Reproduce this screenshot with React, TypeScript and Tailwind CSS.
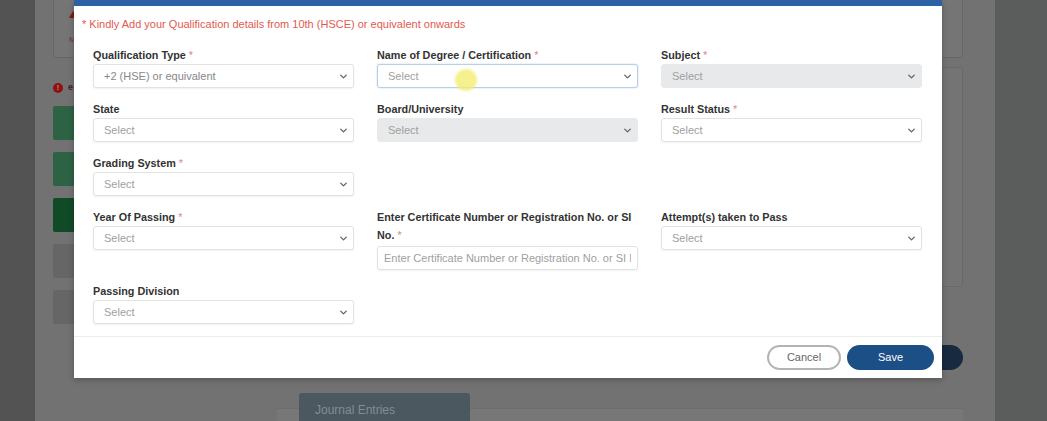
import { ChevronDown } from "lucide-react";

type Field = {
  label: string;
  labelTail?: string;
  required?: boolean;
  value?: string;
  disabled?: boolean;
  focused?: boolean;
  input?: boolean;
} | null;

const FIELDS: Field[] = [
  { label: "Qualification Type", required: true, value: "+2 (HSE) or equivalent" },
  { label: "Name of Degree / Certification", required: true, focused: true },
  { label: "Subject", required: true, disabled: true },
  { label: "State" },
  { label: "Board/University", disabled: true },
  { label: "Result Status", required: true },
  { label: "Grading System", required: true },
  null,
  null,
  { label: "Year Of Passing", required: true },
  {
    label: "Enter Certificate Number or Registration No. or SI",
    labelTail: "No.",
    required: true,
    input: true,
  },
  { label: "Attempt(s) taken to Pass" },
  { label: "Passing Division" },
  null,
  null,
];

function FormField({ field }: { field: NonNullable<Field> }) {
  const star = field.required && <span className="font-normal text-[#e58080]"> *</span>;

  return (
    <div className="flex flex-col">
      <label className="flex flex-col whitespace-nowrap text-[10.8px] font-bold leading-[18px] text-[#333]">
        {field.labelTail ? (
          <>
            <span>{field.label}</span>
            <span>
              {field.labelTail}
              {star}
            </span>
          </>
        ) : (
          <span>
            {field.label}
            {star}
          </span>
        )}
      </label>
      {field.input ? (
        <input
          readOnly
          placeholder="Enter Certificate Number or Registration No. or SI No."
          className="mt-[2px] h-[24px] w-full rounded-[3px] border border-[#e2e2e2] bg-white px-[6px] text-[11px] text-[#555] shadow-[0_1px_2px_rgba(0,0,0,0.06)] outline-none placeholder:text-[#a0a0a0]"
        />
      ) : (
        <div
          className={
            field.disabled
              ? "flex h-[24px] items-center justify-between rounded-[3px] border border-[#e8e9ea] bg-[#e8e9ea] pl-[10px] pr-[4px]"
              : field.focused
              ? "flex h-[24px] items-center justify-between rounded-[3px] border border-[#b9cfe6] bg-white pl-[10px] pr-[4px] shadow-[0_0_2px_rgba(80,130,200,0.35)]"
              : "flex h-[24px] items-center justify-between rounded-[3px] border border-[#e2e2e2] bg-white pl-[10px] pr-[4px] shadow-[0_1px_2px_rgba(0,0,0,0.06)]"
          }
        >
          <span className={field.value ? "text-[11px] text-[#888]" : "text-[11px] text-[#a0a0a0]"}>
            {field.value ?? "Select"}
          </span>
          <ChevronDown size={11} strokeWidth={3} color="#666" />
        </div>
      )}
    </div>
  );
}

function Backdrop() {
  return (
    <div className="flex h-full w-full">
      <div className="w-[35px] shrink-0 bg-[#535353]" />

      <div className="flex flex-1 flex-col bg-[#727272]">
        {/* top alert card */}
        <div className="ml-[18px] mr-[32px] -mt-[10px] h-[68px] shrink-0 rounded-[3px] border border-[#666] bg-[#757575] pl-[15px] pt-[20px]">
          <div className="h-0 w-0 border-x-[4px] border-b-[7px] border-x-transparent border-b-[#801818]" />
          <div className="mt-[18px] text-[8px] leading-[8px] text-[#603535]">M</div>
        </div>

        <div className="flex">
          {/* left step list */}
          <div className="ml-[18px] flex w-[215px] flex-col pt-[25px]">
            <div className="flex h-[10px] items-center gap-[5px]">
              <div className="flex h-[10px] w-[10px] items-center justify-center rounded-full bg-[#8e1212] text-[7px] font-bold text-[#c89090]">
                !
              </div>
              <span className="text-[9px] font-bold text-[#4a1a1a]">e</span>
            </div>
            <div className="mt-[13px] flex flex-col gap-[12px]">
              <div className="h-[34px] rounded-[2px] bg-[#2e6244]" />
              <div className="h-[34px] rounded-[2px] bg-[#2e6244]" />
              <div className="h-[34px] rounded-[2px] bg-[#114a27]" />
              <div className="h-[34px] rounded-[2px] bg-[#666]" />
              <div className="h-[34px] rounded-[2px] bg-[#666]" />
            </div>
          </div>
          {/* right content panel */}
          <div className="ml-auto mr-[32px] mt-[9px] h-[220px] w-[660px] rounded-[3px] border border-[#6a6a6a] bg-[#747474]" />
        </div>

        <div className="mr-[32px] mt-[21px] flex justify-end">
          <div className="h-[25px] w-[70px] rounded-full bg-[#172a40]" />
        </div>

        <div className="ml-[242px] mr-[32px] mt-[38px] flex-1 border-t border-[#6e6e6e] bg-[#777] pl-[22px]">
          <div className="-mt-[16px] flex h-[30px] w-[171px] items-start rounded-t-[3px] bg-[#4c5860] pl-[16px] pt-[10px] text-[12px] leading-[14px] text-[#7f8d97]">
            Journal Entries
          </div>
        </div>
      </div>

      <div className="w-[52px] shrink-0 bg-[#5b5c5c]" />
    </div>
  );
}

export default function App() {
  return (
    <div className="relative h-[421px] w-[1047px] overflow-hidden font-['Liberation_Sans',Arial,sans-serif]">
      <Backdrop />

      {/* modal */}
      <div className="absolute left-[74px] top-0 w-[868px] border-t-[6px] border-[#2c62a3] bg-white shadow-[0_2px_6px_rgba(0,0,0,0.25)]">
        <p className="pl-[8px] pt-[11px] text-[11px] leading-[14px] text-[#df5a50]">
          * Kindly Add your Qualification details from 10th (HSCE) or equivalent onwards
        </p>

        <div className="mt-[15px] grid grid-cols-3 gap-x-[23px] gap-y-[12px] pb-[12px] pl-[19px] pr-[20px]">
          {FIELDS.map((f, i) => (f ? <FormField key={i} field={f} /> : <div key={i} />))}
        </div>

        <div className="flex justify-end gap-[6px] border-t border-[#ececec] pb-[8px] pr-[8px] pt-[8px]">
          <button className="h-[25px] w-[74px] rounded-full border-2 border-[#b4b4b4] bg-white text-[11px] text-[#666]">
            Cancel
          </button>
          <button className="h-[25px] w-[87px] rounded-full bg-[#1d4f87] text-[11px] text-white">
            Save
          </button>
        </div>
      </div>

      {/* screen-recording cursor highlight */}
      <div className="absolute left-[455px] top-[69px] h-[22px] w-[22px] rounded-full bg-[#f2ee72] opacity-80 blur-[1px]" />
    </div>
  );
}
